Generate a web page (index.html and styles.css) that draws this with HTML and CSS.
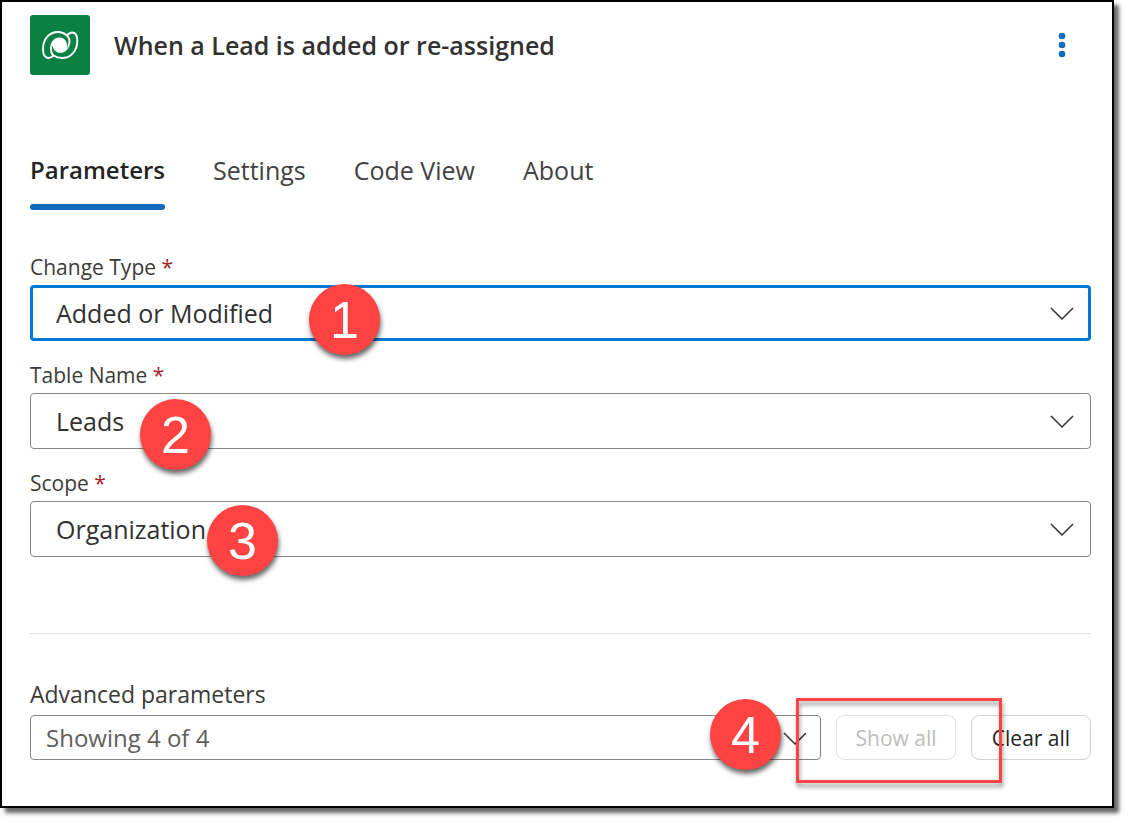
FILE: index.html
```html
<!DOCTYPE html>
<html lang="en">
<head>
    <meta charset="UTF-8">
    <meta name="viewport" content="width=device-width, initial-scale=1">
    <title>When a Lead is added or re-assigned</title>
    <link rel="stylesheet" href="styles.css">
</head>
<body>

    <main class="panel">
        <header class="panel-header">
            <svg class="logo" viewBox="0 0 60 60" aria-hidden="true">
                <rect width="60" height="60" rx="3" fill="#0b8043"/>
                <g fill="none" stroke="#fff" stroke-width="1.900" stroke-linecap="round" stroke-linejoin="round">
                    <path d="M37 20.500C34 18 31 17 28 17C19 17 13 24.500 13 34C13 39.500 15 43 18.500 43C20.500 43 22 42 23.500 40.500C21.500 38.500 20.700 36 21 33"/>
                    <path d="M23.500 40.500C26 42.300 29 43 32 43C41 43 47.300 35.500 47.300 26C47.300 20.500 45.500 17.500 42 17.500C40 17.500 38.500 18.800 37 20.500C39.500 23 40.200 27 38.500 31"/>
                </g>
                <path d="M20.300 34C20 27 24 22.500 29.500 22.500C33.800 22.500 37 25.500 37 30.500L37.300 32.500L39.200 29.500C38.800 34.500 35 37.800 30.500 37.800C26 37.800 22.800 34.500 22.600 30.500C21.800 31.500 21.500 32.500 21.500 34Z" fill="#fff"/>
            </svg>
            <h1>When a Lead is added or re-assigned</h1>
            <button class="more" type="button" aria-label="More">
                <svg viewBox="0 0 8 28" aria-hidden="true">
                    <circle cx="4" cy="5" r="3.300"/>
                    <circle cx="4" cy="14" r="3.300"/>
                    <circle cx="4" cy="23" r="3.300"/>
                </svg>
            </button>
        </header>

        <nav class="tabs">
            <button class="tab active" type="button">Parameters</button>
            <button class="tab" type="button">Settings</button>
            <button class="tab" type="button">Code View</button>
            <button class="tab" type="button">About</button>
        </nav>

        <form class="fields">
            <div class="field">
                <label for="changeType">Change Type <span class="required">*</span></label>
                <div class="select focused">
                    <select id="changeType"><option>Added or Modified</option></select>
                    <svg class="chevron" viewBox="0 0 24 14" aria-hidden="true"><path d="M1 1L12 12L23 1"/></svg>
                    <span class="badge badge-one">1</span>
                </div>
            </div>

            <div class="field">
                <label for="tableName">Table Name <span class="required">*</span></label>
                <div class="select">
                    <select id="tableName"><option>Leads</option></select>
                    <svg class="chevron" viewBox="0 0 24 14" aria-hidden="true"><path d="M1 1L12 12L23 1"/></svg>
                    <span class="badge badge-two">2</span>
                </div>
            </div>

            <div class="field">
                <label for="scope">Scope <span class="required">*</span></label>
                <div class="select">
                    <select id="scope"><option>Organization</option></select>
                    <svg class="chevron" viewBox="0 0 24 14" aria-hidden="true"><path d="M1 1L12 12L23 1"/></svg>
                    <span class="badge badge-three">3</span>
                </div>
            </div>
        </form>

        <!-- Advanced parameters -->
        <section class="advanced">
            <label for="advanced">Advanced parameters</label>
            <div class="advanced-row">
                <div class="select small">
                    <select id="advanced"><option>Showing 4 of 4</option></select>
                    <svg class="chevron" viewBox="0 0 24 14" aria-hidden="true"><path d="M1 1L12 12L23 1"/></svg>
                </div>
                <button class="action" type="button" disabled>Show all</button>
                <button class="action" type="button">Clear all</button>
                <span class="highlight"></span>
                <span class="badge badge-four">4</span>
            </div>
        </section>
    </main>

</body>
</html>
```
FILE: styles.css
```css
* {
    box-sizing: border-box;
}

body {
    margin: 0;
    background: #fff;
    color: #3b3a39;
    font-family: 'Segoe UI', 'Open Sans', sans-serif;
}

button,
select {
    font-family: inherit;
}

.panel {
    margin: 0 15px 15px 0;
    padding: 13px 21px 46px 28px;
    border: 2px solid #000;
    background: #fff;
    box-shadow: 5px 5px 4px rgba(0, 0, 0, 0.6);
}

.panel-header {
    display: flex;
    align-items: center;
    gap: 24px;
}

.logo {
    width: 60px;
    height: 60px;
}

h1 {
    flex: 1;
    margin: 0;
    color: #323130;
    font-size: 25px;
    font-weight: 600;
    line-height: 32px;
}

.more {
    display: flex;
    align-items: center;
    justify-content: center;
    width: 58px;
    height: 60px;
    padding: 0;
    border: none;
    border-radius: 4px;
    background: #fff;
    cursor: pointer;
}

.more svg {
    width: 8px;
    height: 28px;
    fill: #0f6cbd;
}

/* Tabs */
.tabs {
    display: flex;
    gap: 48px;
    margin-top: 57px;
}

.tab {
    padding: 20px 0 16px;
    border: none;
    border-bottom: 6px solid transparent;
    background: none;
    color: #424242;
    font-size: 25px;
    line-height: 36px;
    cursor: pointer;
}

.tab.active {
    position: relative;
    color: #242424;
    font-size: 24px;
    font-weight: 600;
}

.tab.active::after {
    content: "";
    position: absolute;
    left: 0;
    right: 0;
    bottom: -6px;
    height: 6px;
    border-radius: 3px;
    background: #0f6cbd;
}

/* Fields */
.fields {
    display: flex;
    flex-direction: column;
    gap: 16px;
    margin-top: 39px;
}

label {
    display: block;
    font-size: 21px;
    line-height: 36px;
}

.required {
    color: #a4262c;
}

.select {
    position: relative;
}

.select select {
    display: block;
    width: 100%;
    height: 56px;
    padding: 0 60px 0 25px;
    border: 1px solid #8a8886;
    border-radius: 4px;
    background: #fff;
    color: #323130;
    font-size: 25px;
    appearance: none;
}

.select.focused select {
    padding-left: 23px;
    border: 3px solid #0078d4;
}

.select.small {
    flex: 1;
}

.select.small select {
    height: 45px;
    padding-left: 15px;
    color: #605e5c;
    font-size: 24px;
}

.chevron {
    position: absolute;
    top: 50%;
    right: 17px;
    width: 24px;
    height: 14px;
    margin-top: -6px;
    fill: none;
    stroke: #323130;
    stroke-width: 1.5;
    pointer-events: none;
}

.small .chevron {
    right: 14px;
}

.advanced {
    margin-top: 76px;
    padding-top: 40px;
    border-top: 1px solid #e1dfdd;
}

.advanced label {
    font-size: 23px;
    line-height: 41px;
}

.advanced-row {
    position: relative;
    display: flex;
    gap: 15px;
}

.action {
    width: 120px;
    height: 45px;
    padding: 0;
    border: 1px solid #d1d1d1;
    border-radius: 8px;
    background: #fff;
    color: #242424;
    font-size: 21px;
    cursor: pointer;
}

.action:disabled {
    border-color: #e0e0e0;
    color: #bdbdbd;
    cursor: default;
}

/* Step markers */
.badge {
    position: absolute;
    width: 71px;
    height: 71px;
    border-radius: 50%;
    background: #ff4343;
    box-shadow: 1px 4px 5px rgba(0, 0, 0, 0.6);
    color: #fff;
    font-family: 'Liberation Sans', Arial, sans-serif;
    font-size: 52px;
    line-height: 73px;
    text-align: center;
}

.badge-one {
    top: -1px;
    left: 279px;
}

.badge-two {
    top: 6px;
    left: 110px;
}

.badge-three {
    top: 4px;
    left: 177px;
}

.badge-four {
    top: -16px;
    right: 310px;
}

.highlight {
    position: absolute;
    top: -17px;
    right: 89px;
    width: 206px;
    height: 85px;
    border: 3px solid #ff4343;
    filter: drop-shadow(1px 4px 2px rgba(0, 0, 0, 0.4));
    pointer-events: none;
}
```
